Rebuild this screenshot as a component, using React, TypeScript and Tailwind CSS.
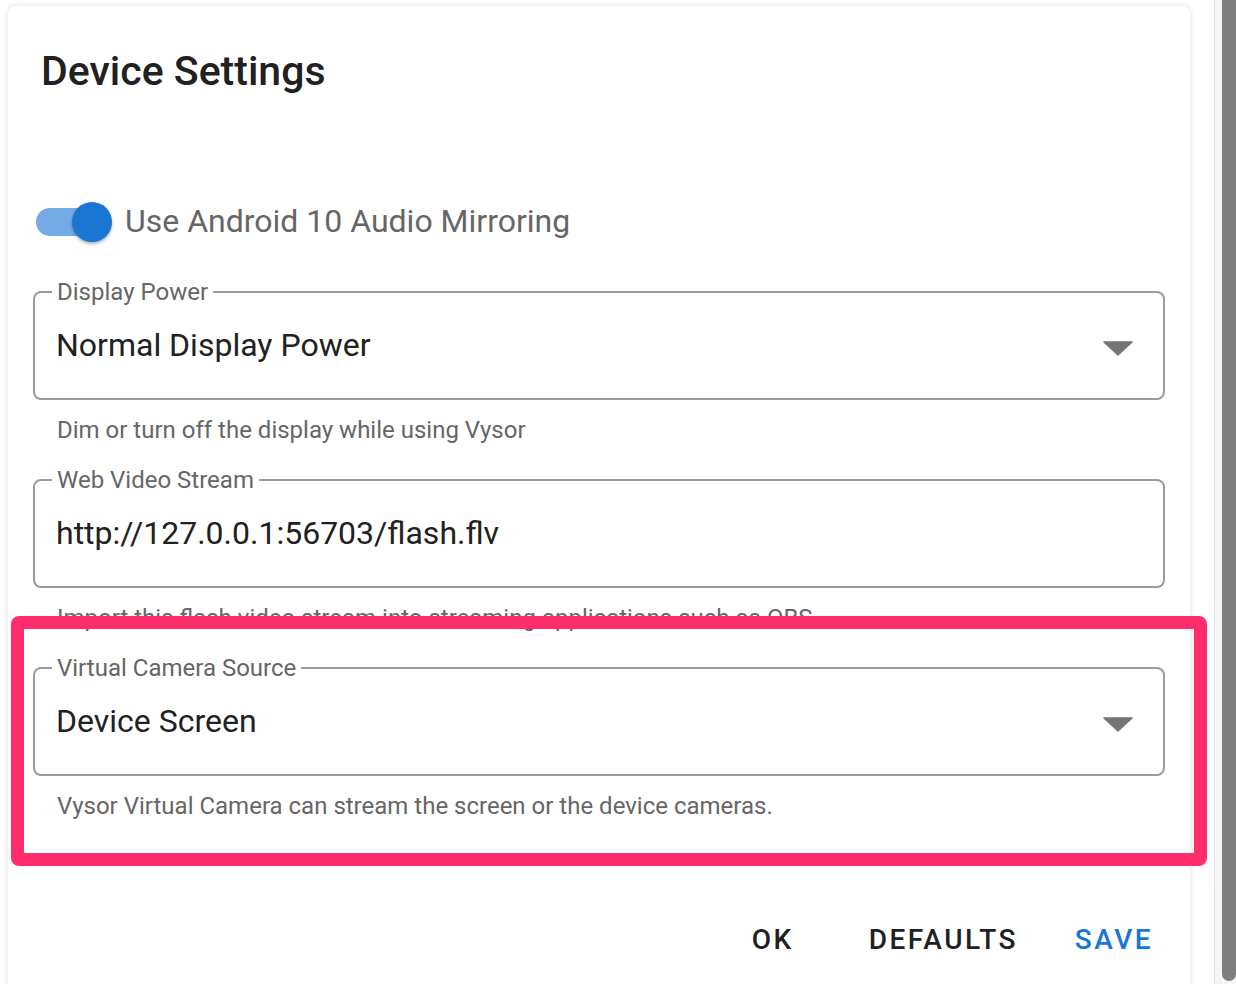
import { useState } from 'react';

type FieldProps = {
  label: string;
  value: string;
  helper: string;
  select?: boolean;
};

function ArrowDrop() {
  return (
    <svg width="30" height="15" viewBox="0 0 30 15" className="mt-[6px] shrink-0">
      <path d="M1 1 L29 1 L15 14 Z" fill="#757575" stroke="#757575" strokeWidth="1.5" strokeLinejoin="round" />
    </svg>
  );
}

function OutlinedField({ label, value, helper, select }: FieldProps) {
  return (
    <div className="mb-[29px]">
      <div className="relative h-[109px] rounded-lg border-2 border-[#9b9b9b] flex items-center justify-between pl-[21px] pr-[30px]">
        <span className="absolute left-[17px] top-[-13px] bg-white px-[5px] text-[24px] leading-[24px] text-[#666666]">
          {label}
        </span>
        <span className="-mt-[2px] text-[32px] text-[#212121]">{value}</span>
        {select && <ArrowDrop />}
      </div>
      <p className="mt-[10px] pl-[24px] text-[24px] leading-[40px] text-[#666666] whitespace-nowrap">{helper}</p>
    </div>
  );
}

function App() {
  const [audio, setAudio] = useState(true);

  return (
    <div className="relative flex h-[984px] w-[1236px] overflow-hidden bg-white font-['Roboto',sans-serif]">
      {/* Dialog */}
      <div className="flex-1 pl-[8px] pt-[6px] pr-[24px]">
        <div className="w-[1182px] h-[1020px] rounded-lg bg-white shadow-[0_0_6px_rgba(0,0,0,0.14)] px-[25px] pt-[41px]">
          <h2 className="ml-[8px] text-[41px] leading-[48px] font-medium text-[#212121]">Device Settings</h2>

          <div className="mt-[107px] mb-[49px] ml-[3px] flex items-center h-[40px]">
            <button
              onClick={() => setAudio(!audio)}
              className="relative flex items-center w-[76px] h-[40px]"
            >
              <div className={audio ? 'w-[68px] h-[28px] rounded-full bg-[#74aae6]' : 'w-[68px] h-[28px] rounded-full bg-[#bdbdbd]'} />
              <div
                className={
                  audio
                    ? 'absolute right-0 top-0 w-10 h-10 rounded-full bg-[#1976d2] shadow-[0_2px_3px_rgba(0,0,0,0.3)]'
                    : 'absolute left-0 top-0 w-10 h-10 rounded-full bg-[#fafafa] shadow-[0_2px_3px_rgba(0,0,0,0.3)]'
                }
              />
            </button>
            <span className="ml-[13px] -mt-[2px] text-[32px] text-[#666666]">Use Android 10 Audio Mirroring</span>
          </div>

          <OutlinedField
            label="Display Power"
            value="Normal Display Power"
            helper="Dim or turn off the display while using Vysor"
            select
          />
          <OutlinedField
            label="Web Video Stream"
            value="http://127.0.0.1:56703/flash.flv"
            helper="Import this flash video stream into streaming applications such as OBS"
          />
          <OutlinedField
            label="Virtual Camera Source"
            value="Device Screen"
            helper="Vysor Virtual Camera can stream the screen or the device cameras."
            select
          />

          {/* Actions */}
          <div className="mt-[78px] -mr-[13px] flex justify-end gap-4">
            <button className="min-w-[128px] h-[72px] px-4 text-[28px] font-medium tracking-[2.5px] text-[#212121]">OK</button>
            <button className="min-w-[128px] h-[72px] px-4 text-[28px] font-medium tracking-[2.5px] text-[#212121]">DEFAULTS</button>
            <button className="min-w-[128px] h-[72px] px-4 text-[28px] font-medium tracking-[2.5px] text-[#1976d2]">SAVE</button>
          </div>
        </div>
      </div>

      {/* Scrollbar */}
      <div className="w-[22px] flex justify-end border-l border-[#e6e6e6] bg-[#f6f6f6]">
        <div className="w-[14px] h-[981px] rounded-b-[7px] bg-[#7f7f7f]" />
      </div>

      {/* Highlight annotation */}
      <div className="absolute left-[11px] top-[616px] w-[1196px] h-[250px] rounded-[8px] border-[13px] border-[#ff2d6c] pointer-events-none" />
    </div>
  );
}

export default App;
